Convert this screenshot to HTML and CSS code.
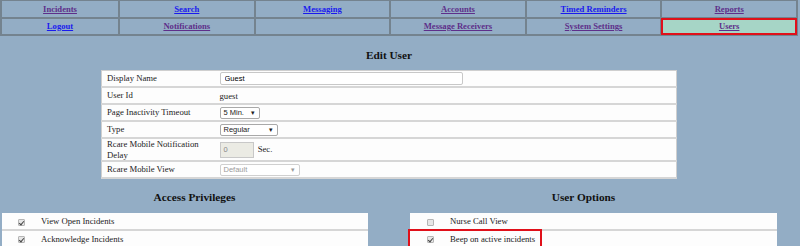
FILE: index.html
```html
<!DOCTYPE html>
<html lang="en">
<head>
    <meta charset="UTF-8">
    <title>Edit User</title>
    <link rel="stylesheet" href="styles.css">
</head>
<body>
    <table class="nav">
        <tr>
            <td class="first"><a href="#" class="seen">Incidents</a></td>
            <td><a href="#">Search</a></td>
            <td><a href="#">Messaging</a></td>
            <td><a href="#" class="seen">Accounts</a></td>
            <td><a href="#">Timed Reminders</a></td>
            <td><a href="#" class="seen">Reports</a></td>
        </tr>
        <tr>
            <td><a href="#">Logout</a></td>
            <td><a href="#" class="seen">Notifications</a></td>
            <td></td>
            <td><a href="#" class="seen">Message Receivers</a></td>
            <td><a href="#" class="seen">System Settings</a></td>
            <td class="current"><a href="#" class="seen">Users</a></td>
        </tr>
    </table>

    <div class="page">
        <h2>Edit User</h2>

        <table class="form">
            <tr>
                <td class="label">Display Name</td>
                <td><input type="text" class="text-wide" value="Guest"></td>
            </tr>
            <tr>
                <td class="label">User Id</td>
                <td>guest</td>
            </tr>
            <tr>
                <td class="label">Page Inactivity Timeout</td>
                <td><span class="select sel-timeout">5 Min.<i>&#9662;</i></span></td>
            </tr>
            <tr>
                <td class="label">Type</td>
                <td><span class="select sel-type">Regular<i>&#9662;</i></span></td>
            </tr>
            <tr class="tall">
                <td class="label">Rcare Mobile Notification Delay</td>
                <td><span class="text-small">0</span> Sec.</td>
            </tr>
            <tr>
                <td class="label">Rcare Mobile View</td>
                <td><span class="select sel-view disabled">Default<i>&#9662;</i></span></td>
            </tr>
        </table>

        <div class="columns">
            <div class="column">
                <h3>Access Privileges</h3>
                <table class="list list-left">
                    <tr>
                        <td class="check"><span class="box on"></span></td>
                        <td>View Open Incidents</td>
                    </tr>
                    <tr>
                        <td class="check"><span class="box on"></span></td>
                        <td>Acknowledge Incidents</td>
                    </tr>
                </table>
            </div>
            <div class="column">
                <h3>User Options</h3>
                <table class="list list-right">
                    <tr>
                        <td class="check"><span class="box"></span></td>
                        <td>Nurse Call View</td>
                    </tr>
                    <tr>
                        <td class="check"><span class="box on"></span></td>
                        <td><span class="marked">Beep on active incidents</span></td>
                    </tr>
                </table>
            </div>
        </div>
    </div>
</body>
</html>
```

FILE: styles.css
```css
* {
    box-sizing: border-box;
}

body {
    margin: 0;
    background: #93adc5;
    font-family: "Liberation Serif", "Times New Roman", serif;
    font-size: 8.7px;
    color: #222;
    overflow: hidden;
}

/* top menu */
.nav {
    width: 798px;
    border-collapse: collapse;
    table-layout: fixed;
    border-top: 1px solid #6f7f8e;
}

.nav td {
    height: 17px;
    border: 2px solid #74838f;
    border-top-width: 1px;
    text-align: center;
    padding: 0;
}

.nav td.first {
    width: 118px;
}

.nav a {
    color: #1a1aee;
    font-weight: bold;
    font-size: 8.6px;
}

.nav a.seen {
    color: #5e2f8a;
}

.nav td.current {
    background: #a6d5c6;
    outline: 2px solid #e0101a;
    outline-offset: -2px;
}

.page {
    width: 778px;
}

h2 {
    text-align: center;
    font-size: 11.3px;
    margin: 13px 0 9px;
    color: #111;
}

/* edit form */
.form {
    margin-left: 101px;
    width: 576px;
    border-collapse: collapse;
    background: #fdfdfd;
    border: 1px solid #cfcfcf;
}

.form td {
    height: 17px;
    padding: 0 5px;
    border-bottom: 2px solid #d6d6d6;
    vertical-align: middle;
}

.form tr.tall td {
    height: 23px;
}

.form td.label {
    width: 116px;
    line-height: 10.5px;
}

.form tr td:nth-child(2) {
    padding-left: 2px;
}

.text-wide {
    width: 243px;
    height: 13px;
    border: 1px solid #c8c8c8;
    border-radius: 2px;
    font-family: "Liberation Sans", Arial, sans-serif;
    font-size: 7.5px;
    padding: 0 4px;
    display: block;
}

.select {
    display: inline-flex;
    align-items: center;
    justify-content: space-between;
    height: 12px;
    border: 1px solid #a9a9a9;
    border-radius: 2px;
    font-family: "Liberation Sans", Arial, sans-serif;
    font-size: 7.5px;
    padding: 0 4px 0 3px;
    background: #fff;
    vertical-align: middle;
}

.select i {
    font-style: normal;
    font-size: 7px;
}

.sel-timeout {
    width: 40px;
}

.sel-type {
    width: 58px;
}

.sel-view {
    width: 80px;
}

.select.disabled {
    color: #9b9b9b;
    border-color: #d0d0d0;
}

.text-small {
    display: inline-block;
    width: 34px;
    height: 16px;
    line-height: 14px;
    border: 1px solid #c8c8c8;
    background: #ebebe4;
    color: #888;
    font-family: "Liberation Sans", Arial, sans-serif;
    font-size: 7.5px;
    padding-left: 3px;
    vertical-align: middle;
    margin-right: 2px;
}

/* checkbox lists */
.columns {
    display: grid;
    grid-template-columns: 389px 389px;
    margin-top: 8px;
}

h3 {
    text-align: center;
    font-size: 11.3px;
    margin: 4px 0 10px;
    color: #111;
}

.list {
    border-collapse: collapse;
    background: #fdfdfd;
    width: 366px;
}

.list-left {
    margin-left: 2px;
}

.list-right {
    margin-left: 21px;
    width: 367px;
}

.list td {
    height: 17px;
    border-bottom: 2px solid #d6d6d6;
    padding: 0;
}

.list td.check {
    width: 39px;
    text-align: center;
}

.list-right td.check {
    width: 40px;
}

.box {
    display: inline-block;
    width: 7px;
    height: 7px;
    border: 1px solid #b5b5b5;
    border-radius: 1px;
    background: #e6e6e6;
    position: relative;
    vertical-align: middle;
}

.box.on::after {
    content: "";
    position: absolute;
    left: 1px;
    top: 0;
    width: 2px;
    height: 4px;
    border: solid #444;
    border-width: 0 1px 1px 0;
    transform: rotate(40deg);
}

.marked {
    position: relative;
}

.marked::before {
    content: "";
    position: absolute;
    left: -42px;
    right: -7px;
    top: -5px;
    bottom: -5px;
    border: 2px solid #e0101a;
}
```
